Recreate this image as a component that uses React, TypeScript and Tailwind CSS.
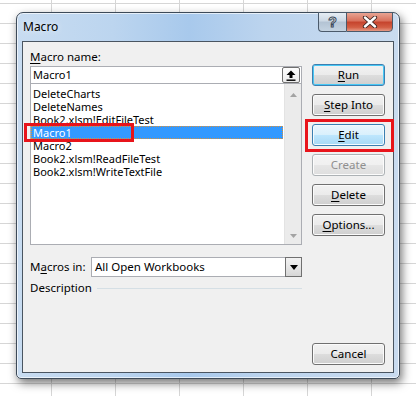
import React from "react";

type V = "normal" | "default" | "hot" | "disabled";

function Btn({ children, v = "normal" }: { children: React.ReactNode; v?: V }) {
  const cls: Record<V, string> = {
    normal:
      "border-[#707070] text-black bg-[linear-gradient(to_bottom,#f2f2f2_0%,#ebebeb_50%,#dddddd_51%,#cfcfcf_100%)] shadow-[inset_0_0_0_1px_#fbfbfb]",
    default:
      "border-[#3c7fb1] text-black bg-[linear-gradient(to_bottom,#f2f2f2_0%,#ebebeb_50%,#dddddd_51%,#cfcfcf_100%)] shadow-[inset_0_0_0_1px_#48c8f5]",
    hot:
      "border-[#3c7fb1] text-black bg-[linear-gradient(to_bottom,#eaf6fd_0%,#d9f0fc_50%,#bee6fd_51%,#a7d9f5_100%)] shadow-[inset_0_0_0_1px_#f4fbfe]",
    disabled:
      "border-[#adb2b5] text-[#8f8f8f] bg-[linear-gradient(to_bottom,#f4f4f4_0%,#f0f0f0_50%,#e6e6e6_51%,#dedede_100%)] shadow-[inset_0_0_0_1px_#fcfcfc]",
  };
  return (
    <div
      className={
        "h-[22px] w-[73px] shrink-0 rounded-[3px] border flex items-center justify-center text-[11.5px] leading-[14px] " +
        cls[v]
      }
    >
      {children}
    </div>
  );
}

function U({ children }: { children: React.ReactNode }) {
  return <span className="underline decoration-1 underline-offset-[2px]">{children}</span>;
}

const items = [
  "DeleteCharts",
  "DeleteNames",
  "Book2.xlsm!EditFileTest",
  "Macro1",
  "Macro2",
  "Book2.xlsm!ReadFileTest",
  "Book2.xlsm!WriteTextFile",
];

export default function App() {
  return (
    <div className="relative w-[416px] h-[396px] overflow-hidden bg-white bg-[linear-gradient(to_right,#d6d6d6_1px,transparent_1px),linear-gradient(to_bottom,#d6d6d6_1px,transparent_1px)] [background-size:64px_20px] [background-position:51px_3px] pt-[12px] pl-[16px] font-['Noto_Sans',sans-serif] text-black">
      {/* Window */}
      <div className="w-[384px] h-[367px] flex flex-col rounded-t-[7px] rounded-b-[5px] border border-[#3d4a58] bg-[linear-gradient(90deg,#c8dcf1_0%,#bcd5ef_25%,#a8c9ec_45%,#bcd4ee_65%,#c9dbef_100%)] shadow-[2px_4px_10px_rgba(0,0,0,0.55),inset_0_0_0_1px_rgba(255,255,255,0.65)]">
        {/* Title bar */}
        <div className="h-[28px] flex shrink-0">
          <div className="pl-[6px] flex items-center text-[12px] leading-[16px] [text-shadow:0_0_6px_rgba(255,255,255,0.9)]">
            Macro
          </div>
          <div className="ml-auto mr-[6px] -mt-px flex h-[20px]">
            <div className="w-[28px] h-[20px] rounded-bl-[4px] border border-[#4b5a6b] border-r-0 bg-[linear-gradient(to_bottom,#e6edf4_0%,#ccd8e4_45%,#b3c3d4_50%,#c4d3e1_100%)] flex items-center justify-center text-[14px] font-bold text-white leading-none [-webkit-text-stroke:1px_#3b4a5a] font-['Liberation_Sans',sans-serif]">
              ?
            </div>
            <div className="w-[47px] h-[20px] rounded-br-[4px] border border-[#4b5a6b] bg-[linear-gradient(to_bottom,#e8a493_0%,#d8705b_45%,#c5432c_50%,#d35f45_80%,#e59a85_100%)] flex items-center justify-center">
              <svg width="16" height="12" viewBox="0 0 16 12">
                <path d="M3 1.5 L13 10.5 M13 1.5 L3 10.5" stroke="#3a2520" strokeWidth="4.2" strokeLinecap="round" />
                <path d="M3 1.5 L13 10.5 M13 1.5 L3 10.5" stroke="#ffffff" strokeWidth="2.4" strokeLinecap="round" />
              </svg>
            </div>
          </div>
        </div>
        {/* Client area */}
        <div className="flex-1 mx-[5px] mb-[5px] border border-[#4a5561] bg-[#f0f0f0] flex pl-[7px] text-[11px]">
          {/* Left column */}
          <div className="w-[272px] flex flex-col">
            <div className="mt-[7px] h-[16px] leading-[16px] text-[11.5px]">
              <U>M</U>acro name:
            </div>
            <div className="mt-px h-[18px] border border-[#abadb3] bg-white flex items-center">
              <span className="pl-[2px] leading-[14px]">Macro1</span>
              <div className="ml-auto mr-px w-[18px] h-[16px] rounded-[2px] border border-[#707070] bg-[linear-gradient(to_bottom,#fdfdfd,#ececec)] flex items-center justify-center">
                <svg width="10" height="11" viewBox="0 0 10 11">
                  <path d="M5 0.5 L9.5 5 L6.5 5 L6.5 8 L3.5 8 L3.5 5 L0.5 5 Z" fill="#000" />
                  <rect x="0.5" y="9.5" width="9" height="1.4" fill="#000" />
                </svg>
              </div>
            </div>
            <div className="h-[161px] border border-t-0 border-[#abadb3] bg-white flex">
              <div className="flex-1 pt-[3px] flex flex-col">
                {items.map((t) =>
                  t === "Macro1" ? (
                    <div
                      key={t}
                      className="h-[13px] leading-[13px] pl-[2px] mr-px bg-[#3399ff] text-white outline outline-1 outline-dotted outline-[#d8913e] -outline-offset-1"
                    >
                      {t}
                    </div>
                  ) : (
                    <div key={t} className="h-[13px] leading-[13px] pl-[2px]">
                      {t}
                    </div>
                  )
                )}
              </div>
              <div className="w-[17px] bg-[#ebebeb] border-l border-[#e3e3e3] flex flex-col items-center justify-between pt-[9px] pb-[6px]">
                <svg width="7" height="4" viewBox="0 0 7 4">
                  <path d="M0 4 L3.5 0 L7 4 Z" fill="#a3a3a3" />
                </svg>
                <svg width="7" height="4" viewBox="0 0 7 4">
                  <path d="M0 0 L7 0 L3.5 4 Z" fill="#a3a3a3" />
                </svg>
              </div>
            </div>
            <div className="mt-[12px] flex items-center h-[20px]">
              <div className="w-[61px] leading-[16px] text-[11.5px]">
                M<U>a</U>cros in:
              </div>
              <div className="flex-1 h-[20px] border border-[#abadb3] bg-white flex items-center">
                <span className="pl-[3px] leading-[14px] text-[11.5px]">All Open Workbooks</span>
                <div className="ml-auto w-[17px] h-[20px] -mr-px border border-[#707070] bg-[linear-gradient(to_bottom,#f2f2f2_0%,#e6e6e6_50%,#d6d6d6_100%)] flex items-center justify-center">
                  <svg width="8" height="5" viewBox="0 0 8 5">
                    <path d="M0 0 L8 0 L4 5 Z" fill="#000" />
                  </svg>
                </div>
              </div>
            </div>
            <div className="mt-[3px] h-[16px] flex items-center">
              <span className="leading-[16px] text-[11.5px]">Description</span>
              <div className="flex-1 ml-[5px] h-px bg-[#d5dfe5]" />
            </div>
          </div>
          {/* Right column */}
          <div className="ml-[10px] pt-[22px] pb-[7px] flex flex-col gap-[8px]">
            <Btn v="default">
              <U>R</U>un
            </Btn>
            <Btn>
              <U>S</U>tep Into
            </Btn>
            <Btn v="hot">
              <U>E</U>dit
            </Btn>
            <Btn v="disabled">Create</Btn>
            <Btn>
              <U>D</U>elete
            </Btn>
            <Btn>
              <U>O</U>ptions...
            </Btn>
            <div className="mt-auto">
              <Btn>Cancel</Btn>
            </div>
          </div>
        </div>
      </div>
      {/* Red annotation boxes */}
      <div className="absolute left-[24px] top-[123px] w-[110px] h-[19px] border-[3px] border-[#e8141b]" />
      <div className="absolute left-[305px] top-[119px] w-[89px] h-[33px] border-[3px] border-[#e8141b]" />
    </div>
  );
}
